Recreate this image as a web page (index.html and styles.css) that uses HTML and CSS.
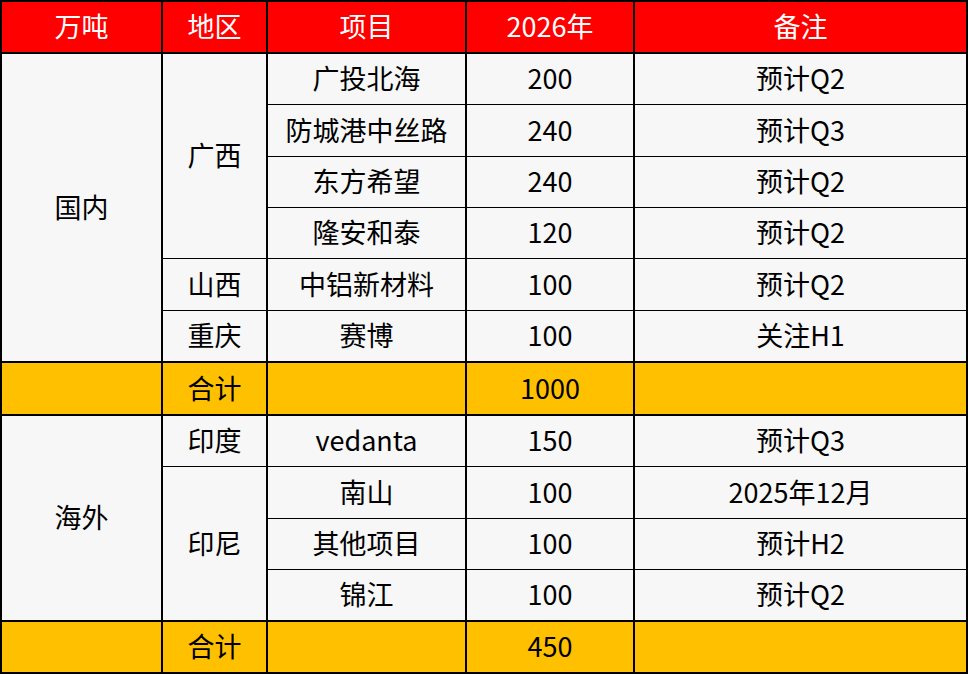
FILE: index.html
```html
<!DOCTYPE html>
<html lang="zh">
<head>
<meta charset="utf-8">
<link rel="stylesheet" href="styles.css">
</head>
<body>
<table class="tbl">
  <colgroup>
    <col class="c1"><col class="c2"><col class="c3"><col class="c4"><col class="c5">
  </colgroup>
  <thead>
    <tr class="head">
      <th>万吨</th><th>地区</th><th>项目</th><th>2026年</th><th>备注</th>
    </tr>
  </thead>
  <tbody>
    <tr><td rowspan="6">国内</td><td rowspan="4">广西</td><td>广投北海</td><td>200</td><td>预计Q2</td></tr>
    <tr class="tall"><td>防城港中丝路</td><td>240</td><td>预计Q3</td></tr>
    <tr><td>东方希望</td><td>240</td><td>预计Q2</td></tr>
    <tr><td>隆安和泰</td><td>120</td><td>预计Q2</td></tr>
    <tr class="tall"><td>山西</td><td>中铝新材料</td><td>100</td><td>预计Q2</td></tr>
    <tr><td>重庆</td><td>赛博</td><td>100</td><td>关注H1</td></tr>
    <tr class="total tall"><td></td><td>合计</td><td></td><td>1000</td><td></td></tr>
    <tr><td rowspan="4">海外</td><td>印度</td><td>vedanta</td><td>150</td><td>预计Q3</td></tr>
    <tr class="tall"><td rowspan="3">印尼</td><td>南山</td><td>100</td><td>2025年12月</td></tr>
    <tr><td>其他项目</td><td>100</td><td>预计H2</td></tr>
    <tr><td>锦江</td><td>100</td><td>预计Q2</td></tr>
    <tr class="total"><td></td><td>合计</td><td></td><td>450</td><td></td></tr>
  </tbody>
</table>
</body>
</html>
```
FILE: styles.css
```css
html, body {
  margin: 0;
  padding: 0;
  background: #ffffff;
}
.tbl {
  border-collapse: collapse;
  table-layout: fixed;
  width: 966px;
  font-family: "Noto Sans CJK SC", "Noto Sans", sans-serif;
  font-size: 27px;
  color: #000;
  background: #f7f7f7;
  border: 2px solid #000;
}
.c1 { width: 161px; }
.c2 { width: 105px; }
.c3 { width: 199px; }
.c4 { width: 168px; }
.c5 { width: 333px; }
.tbl th, .tbl td {
  padding: 0 0 3px 0;
  height: 47px;
  text-align: center;
  vertical-align: middle;
  font-weight: normal;
  line-height: 1;
  border-top: 1px solid #000;
  border-bottom: 1px solid #000;
  border-left: 2px solid #000;
  border-right: 2px solid #000;
}
.tbl .tall td {
  height: 48px;
}
.head th {
  background: #ff0000;
  color: #ffffff;
  border-bottom: 2px solid #000;
  border-top: 2px solid #000;
}
.total td {
  background: #ffc000;
  border-top: 2px solid #000;
  border-bottom: 2px solid #000;
}
```
